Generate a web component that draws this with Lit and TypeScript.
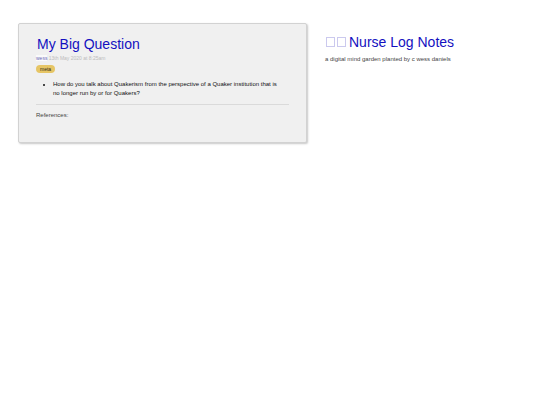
import { LitElement, html, css } from 'lit';
import { customElement, property } from 'lit/decorators.js';

@customElement('note-card')
export class NoteCard extends LitElement {
  @property() heading = '';
  @property() author = '';
  @property() date = '';
  @property({ type: Array }) tags: string[] = [];
  @property({ type: Array }) items: string[] = [];

  static styles = css`
    :host {
      display: block;
    }
    .card {
      background: #f0f0f0;
      border: 1px solid #d2d2d2;
      border-radius: 2px;
      box-shadow: 1px 1px 2px #c8c8c8;
      padding: 11px 17px 22px;
    }
    .title {
      font-size: 14px;
      font-weight: 400;
      line-height: 18px;
      margin: 0 0 0 1px;
    }
    .title a {
      color: #1410c0;
      text-decoration: none;
    }
    .meta {
      color: #bcbcbc;
      font-size: 5px;
      line-height: 8px;
      margin: 1px 0 0;
    }
    .meta a {
      background: #fafafa;
      color: #6c68b8;
      text-decoration: none;
    }
    .tags {
      display: flex;
      gap: 4px;
      margin-top: 3px;
    }
    .tag {
      background: #e6c565;
      border-radius: 4px;
      color: #302a16;
      font-size: 5px;
      line-height: 8px;
      padding: 0 4px;
      text-decoration: none;
    }
    .list {
      color: #111;
      font-size: 6px;
      line-height: 9px;
      margin: 7px 0 6px;
      padding: 0 8px 0 17px;
    }
    .rule {
      border: 0;
      border-top: 1px solid #dadada;
      margin: 0;
    }
    .references {
      color: #444;
      font-size: 6px;
      line-height: 9px;
      margin: 6px 0 0;
    }
  `;

  render() {
    return html`
      <article class="card">
        <h2 class="title"><a href="#">${this.heading}</a></h2>
        <p class="meta"><a href="#">${this.author}</a> ${this.date}</p>
        <div class="tags">
          ${this.tags.map((t) => html`<a class="tag" href="#">${t}</a>`)}
        </div>
        <ul class="list">
          ${this.items.map((i) => html`<li>${i}</li>`)}
        </ul>
        <hr class="rule" />
        <p class="references">References:</p>
      </article>
    `;
  }
}

@customElement('app-root')
export class AppRoot extends LitElement {
  static styles = css`
    :host {
      display: block;
      font-family: 'Liberation Sans', Arial, sans-serif;
    }
    .page {
      display: grid;
      grid-template-columns: 289fr 197fr;
      align-items: start;
      gap: 18px;
      padding: 23px 18px;
    }
    .site {
      padding-top: 10px;
    }
    .name {
      font-size: 14px;
      font-weight: 400;
      line-height: 18px;
      margin: 0;
    }
    .name a {
      display: flex;
      align-items: center;
      gap: 3px;
      color: #1410c0;
      text-decoration: none;
    }
    .glyphs {
      display: flex;
      gap: 2px;
      padding-left: 1px;
    }
    .glyph {
      border: 1px solid #cbc9ee;
      box-sizing: border-box;
      height: 10px;
      width: 9px;
    }
    .tagline {
      color: #444;
      font-size: 6px;
      line-height: 9px;
      margin: 4px 0 0;
    }
  `;

  render() {
    return html`
      <main class="page">
        <note-card
          heading="My Big Question"
          author="wess"
          date="13th May 2020 at 8:25am"
          .tags="${['meta']}"
          .items="${[
            'How do you talk about Quakerism from the perspective of a Quaker institution that is no longer run by or for Quakers?',
          ]}"
        ></note-card>
        <header class="site">
          <h1 class="name">
            <a href="#">
              <span class="glyphs" aria-hidden="true">
                <span class="glyph"></span>
                <span class="glyph"></span>
              </span>
              Nurse Log Notes
            </a>
          </h1>
          <p class="tagline">a digital mind garden planted by c wess daniels</p>
        </header>
      </main>
    `;
  }
}
